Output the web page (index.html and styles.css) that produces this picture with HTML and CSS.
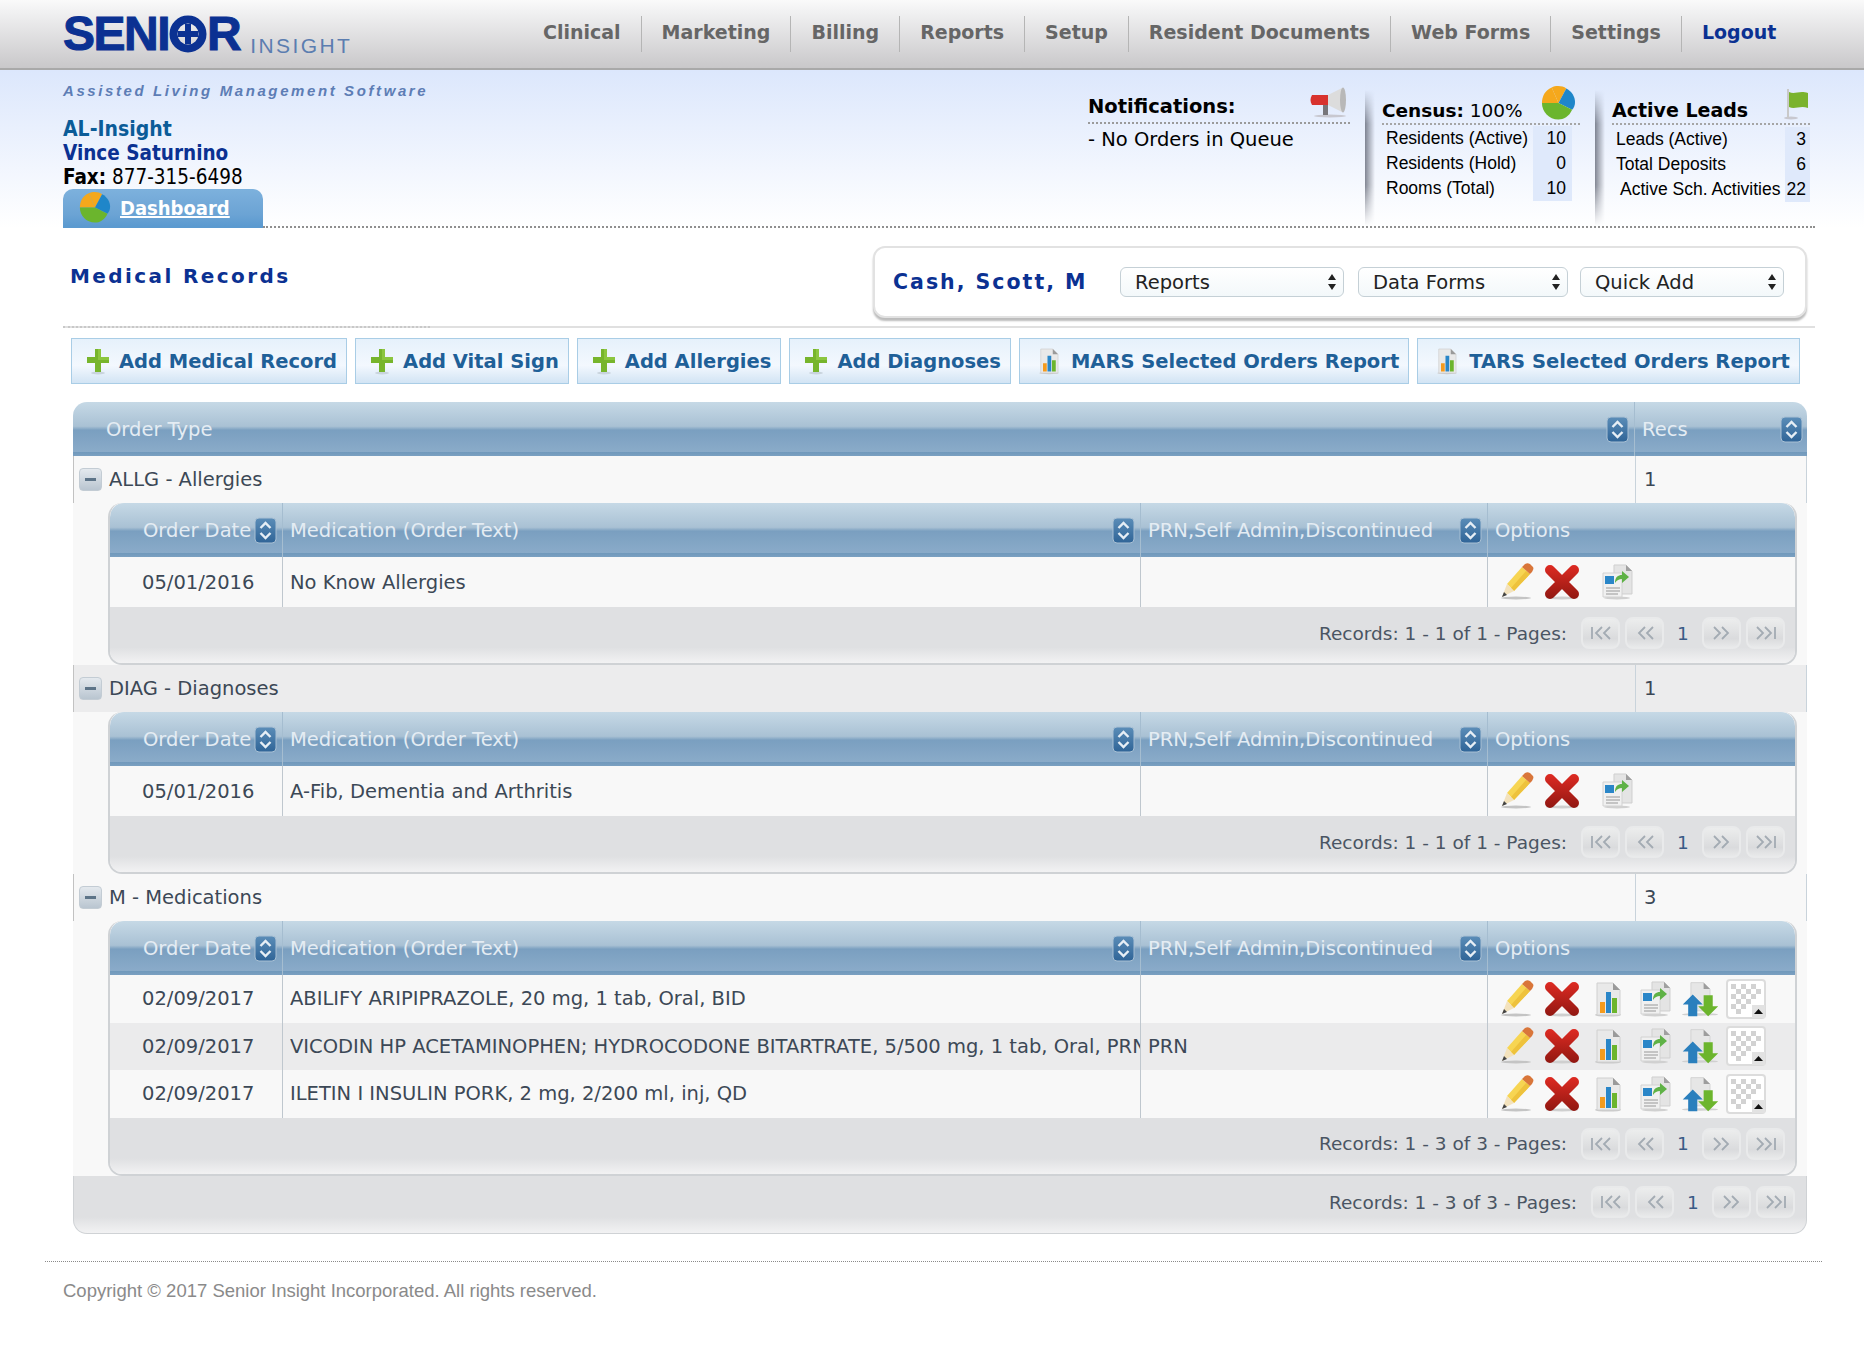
FILE: index.html
```html
<!DOCTYPE html>
<html lang="en">
<head>
  <meta charset="UTF-8" />
  <title>Senior Insight - Medical Records</title>
  <link rel="stylesheet" href="styles.css">
</head>
<body>
  <!-- icons, reused with <use> -->
  <svg class="sprite" aria-hidden="true">
    <defs>
      <linearGradient id="redfade" gradientUnits="userSpaceOnUse" x1="0" y1="4" x2="0" y2="36"><stop offset="0" stop-color="#dc2a22"/><stop offset="1" stop-color="#931812"/></linearGradient>
      <linearGradient id="sortfade" x1="0" y1="0" x2="0" y2="1"><stop offset="0" stop-color="#5b8db8"/><stop offset="1" stop-color="#2f6497"/></linearGradient>
    </defs>
    <symbol id="i-sort" viewBox="0 0 23 27">
      <rect x="1" y="1" width="21" height="25" rx="4" fill="url(#sortfade)" stroke="#a9c0d4"/>
      <path d="M6.5 11 11.5 6l5 5M6.5 16l5 5 5-5" fill="none" stroke="#e6eef5" stroke-width="2.4"/>
    </symbol>
    <symbol id="i-plus" viewBox="0 0 24 28">
      <ellipse cx="12" cy="26" rx="7" ry="1.5" fill="#c9d4dd"/>
      <path d="M9 2h6v8h8v6h-8v9H9v-9H1v-6h8z" fill="#77b52c"/>
      <path d="M9 2h6v8h8v3H12V2z" fill="#8cc63f"/>
    </symbol>
    <symbol id="i-pencil" viewBox="0 0 40 40">
      <ellipse cx="20" cy="36" rx="15" ry="1.4" fill="#c4c4c4"/>
      <path d="M11 22 26 5l8 7-16 17z" fill="#f7d552"/>
      <path d="M15 26 30 9l4 3-16 17z" fill="#eec23c"/>
      <path d="M26 5l3-3c2-1 3-1 5 0l3 3c1 2 0 3-1 5l-2 2z" fill="#d9763a"/>
      <path d="M11 22l7 7-12 6z" fill="#f3e2bd"/>
      <path d="M8 30l3 3-5 2z" fill="#444"/>
    </symbol>
    <symbol id="i-del" viewBox="0 0 40 40">
      <ellipse cx="20" cy="36" rx="16" ry="1.4" fill="#cfcfcf"/>
      <path d="M8 8l24 24M32 8 8 32" fill="none" stroke="url(#redfade)" stroke-width="10" stroke-linecap="round"/>
    </symbol>
    <symbol id="i-chart" viewBox="0 0 40 40">
      <ellipse cx="20" cy="36" rx="13" ry="1.6" fill="#c9c9c9"/>
      <path d="M9 4h16l7 7v25H9z" fill="#e9e9e9" stroke="#d0d0d0"/>
      <path d="M25 4l7 7h-7z" fill="#9a9a9a"/>
      <rect x="12" y="23" width="5" height="11" fill="#f59b1d"/>
      <rect x="18" y="13" width="5" height="21" fill="#2a86c8"/>
      <rect x="24" y="19" width="5" height="15" fill="#6cb52d"/>
    </symbol>
    <symbol id="i-copy" viewBox="0 0 40 40">
      <ellipse cx="21" cy="36" rx="13" ry="1.4" fill="#d0d0d0"/>
      <path d="M18 3h12l6 6v23H18z" fill="#e4e4e4" stroke="#cfcfcf"/>
      <path d="M30 3l6 6h-6z" fill="#a0a0a0"/>
      <path d="M7 11h19v24H7z" fill="#f0f0f0" stroke="#d2d2d2"/>
      <rect x="9" y="14" width="9" height="8" fill="#2a86c8"/>
      <path d="M10 26h14M10 29h14M10 32h12" stroke="#b5b5b5" stroke-width="1.3"/>
      <path d="M19 21c0-6 3-8 7-8V9l7 6-7 6v-4c-3 0-5 1-7 4z" fill="#5fb246"/>
    </symbol>
    <symbol id="i-updown" viewBox="0 0 44 40">
      <ellipse cx="22" cy="37" rx="20" ry="1.3" fill="#d0d0d0"/>
      <path d="M12 2h14l7 7v24H12z" fill="#e6e6e6" stroke="#d2d2d2"/>
      <path d="M26 2l7 7h-7z" fill="#9d9d9d"/>
      <path d="M14 15 25 26h-6v13H9V26H3z" fill="#2a7fbd"/>
      <path d="M26 16h10v12h6L31 39 20 28h6z" fill="#6cb52d"/>
    </symbol>
    <symbol id="i-check" viewBox="0 0 40 40">
      <rect x="1" y="1" width="38" height="38" rx="3" fill="#fff" stroke="#dcdcdc" stroke-width="2"/>
      <path d="M5 5h5v5H5zM15 5h5v5h-5zM25 5h5v5h-5zM10 10h5v5h-5zM20 10h5v5h-5zM30 10h5v5h-5zM5 15h5v5H5zM15 15h5v5h-5zM25 15h5v5h-5zM10 20h5v5h-5zM20 20h5v5h-5zM5 25h5v5H5zM15 25h5v5h-5zM10 30h5v5h-5z" fill="#d2d2d2"/>
      <rect x="26" y="26" width="13" height="13" fill="#e2e2e2"/>
      <path d="M28 35l4.500-5 4.500 5z" fill="#111"/>
    </symbol>
    <symbol id="i-pie" viewBox="0 0 36 36">
      <path d="M18 18 11 2c4-2 11-2 15 1z" fill="#f5a81c"/>
      <path d="M18 18 11 2C4 5 1 11 1 18z" fill="#f5a81c"/>
      <path d="M18 18 26 3c6 3 9 9 9 14 0 3-1 6-3 8z" fill="#1f86c9"/>
      <path d="M18 18 32 25c-3 7-9 10-14 10C8 35 1 27 1 18z" fill="#6bb52d"/>
    </symbol>
    <symbol id="i-first" viewBox="0 0 24 14"><path d="M3 1v12M13 1 7 7l6 6M21 1l-6 6 6 6" fill="none" stroke="#a3abb3" stroke-width="1.8"/></symbol>
    <symbol id="i-prev" viewBox="0 0 24 14"><path d="M12 1 6 7l6 6M20 1l-6 6 6 6" fill="none" stroke="#a3abb3" stroke-width="1.8"/></symbol>
    <symbol id="i-next" viewBox="0 0 24 14"><path d="M4 1l6 6-6 6M12 1l6 6-6 6" fill="none" stroke="#a3abb3" stroke-width="1.8"/></symbol>
    <symbol id="i-last" viewBox="0 0 24 14"><path d="M3 1l6 6-6 6M11 1l6 6-6 6M21 1v12" fill="none" stroke="#a3abb3" stroke-width="1.8"/></symbol>
  </svg>

  <header class="topbar">
    <div class="logo">
      <span class="logo-main">SENI<svg class="logo-o" viewBox="0 0 38 38"><circle cx="19" cy="19" r="14.500" fill="none" stroke="#0b3192" stroke-width="8"/><path d="M16 9h6v7h7v6h-7v7h-6v-7H9v-6h7z" fill="#0b3192"/></svg>R</span>
      <span class="logo-sub">INSIGHT</span>
    </div>
    <nav class="mainnav">
      <a href="#">Clinical</a>
      <a href="#">Marketing</a>
      <a href="#">Billing</a>
      <a href="#">Reports</a>
      <a href="#">Setup</a>
      <a href="#">Resident Documents</a>
      <a href="#">Web Forms</a>
      <a href="#">Settings</a>
      <a href="#" class="logout">Logout</a>
    </nav>
  </header>

  <section class="subhead">
    <div class="company">
      <div class="tagline">Assisted Living Management Software</div>
      <div class="co-name">AL-Insight</div>
      <div class="co-user">Vince Saturnino</div>
      <div class="co-fax"><b>Fax:</b> 877-315-6498</div>
      <div class="dash-tab">
        <svg class="dash-pie"><use href="#i-pie"/></svg>
        <a href="#">Dashboard</a>
      </div>
    </div>
    <div class="panels">
      <div class="panel-notify">
        <div class="notify-head">
          <b>Notifications:</b>
          <svg class="megaphone" viewBox="0 0 38 32">
            <ellipse cx="20" cy="30" rx="16" ry="1.500" fill="#c8c8d0"/>
            <rect x="13" y="18" width="5" height="11" fill="#77767a"/>
            <path d="M2 9h16v10H2c-2-3-2-7 0-10z" fill="#d8322e"/>
            <path d="M18 9 32 2v24L18 19z" fill="#dcdcdc"/>
            <ellipse cx="33" cy="14" rx="3" ry="12.500" fill="#b8b8b8"/>
          </svg>
        </div>
        <div class="notify-item">- No Orders in Queue</div>
      </div>
      <div class="panel-stat panel-census">
        <div class="stat-head"><span><b>Census:</b> 100%</span><svg class="stat-pie"><use href="#i-pie"/></svg></div>
        <table class="stat-table census-table">
          <tr><td>Residents (Active)</td><td class="num">10</td></tr>
          <tr><td>Residents (Hold)</td><td class="num">0</td></tr>
          <tr><td>Rooms (Total)</td><td class="num">10</td></tr>
        </table>
      </div>
      <div class="panel-stat panel-leads">
        <div class="stat-head"><b>Active Leads</b>
          <svg class="flag" viewBox="0 0 26 34">
            <ellipse cx="7" cy="31" rx="7" ry="1.500" fill="#c8c8d0"/>
            <rect x="3" y="2" width="2" height="29" fill="#c9c9c9"/>
            <path d="M5 5c6 3 10-2 19 1v15c-8-3-13 2-19-1z" fill="#7ab32e"/>
          </svg>
        </div>
        <table class="stat-table leads-table">
          <tr><td>Leads (Active)</td><td class="num">3</td></tr>
          <tr><td>Total Deposits</td><td class="num">6</td></tr>
          <tr><td class="indent">Active Sch. Activities</td><td class="num">22</td></tr>
        </table>
      </div>
    </div>
  </section>

  <main class="content">
    <div class="titlebar">
      <h2 class="page-title">Medical Records</h2>
      <div class="patient-box">
        <span class="patient-name">Cash, Scott, M</span>
        <div class="picker picker-reports"><select><option>Reports</option></select><svg class="picker-arrows" viewBox="0 0 10 18"><path d="M5 1l4 6H1zM5 17l4-6H1z"/></svg></div>
        <div class="picker picker-forms"><select><option>Data Forms</option></select><svg class="picker-arrows" viewBox="0 0 10 18"><path d="M5 1l4 6H1zM5 17l4-6H1z"/></svg></div>
        <div class="picker picker-add"><select><option>Quick Add</option></select><svg class="picker-arrows" viewBox="0 0 10 18"><path d="M5 1l4 6H1zM5 17l4-6H1z"/></svg></div>
      </div>
    </div>

    <div class="actions">
      <a href="#" class="action"><svg class="ic-plus"><use href="#i-plus"/></svg>Add Medical Record</a>
      <a href="#" class="action"><svg class="ic-plus"><use href="#i-plus"/></svg>Add Vital Sign</a>
      <a href="#" class="action"><svg class="ic-plus"><use href="#i-plus"/></svg>Add Allergies</a>
      <a href="#" class="action"><svg class="ic-plus"><use href="#i-plus"/></svg>Add Diagnoses</a>
      <a href="#" class="action"><svg class="ic-report"><use href="#i-chart"/></svg>MARS Selected Orders Report</a>
      <a href="#" class="action"><svg class="ic-report"><use href="#i-chart"/></svg>TARS Selected Orders Report</a>
    </div>

    <div class="grid">
      <table class="grid-table">
        <colgroup><col class="c-type"><col class="c-recs"></colgroup>
        <thead>
          <tr>
            <th class="th-type"><div class="th-in">Order Type<svg class="sort"><use href="#i-sort"/></svg></div></th>
            <th><div class="th-in">Recs<svg class="sort"><use href="#i-sort"/></svg></div></th>
          </tr>
        </thead>
        <tbody>
          <tr class="group">
            <td><div class="group-name"><span class="toggle"></span>ALLG - Allergies</div></td>
            <td class="group-count">1</td>
          </tr>
          <tr>
            <td colspan="2" class="detail">
              <div class="subgrid">
                <table class="sub-table">
                  <colgroup><col class="c-date"><col class="c-med"><col class="c-prn"><col></colgroup>
                  <thead>
                    <tr>
                      <th class="th-date"><div class="th-in">Order Date<svg class="sort"><use href="#i-sort"/></svg></div></th>
                      <th><div class="th-in">Medication (Order Text)<svg class="sort"><use href="#i-sort"/></svg></div></th>
                      <th><div class="th-in">PRN,Self Admin,Discontinued<svg class="sort"><use href="#i-sort"/></svg></div></th>
                      <th><div class="th-in">Options</div></th>
                    </tr>
                  </thead>
                  <tbody>
                    <tr class="row-single">
                      <td class="td-date">05/01/2016</td>
                      <td><div class="clip">No Know Allergies</div></td>
                      <td></td>
                      <td><div class="opts"><svg class="opt"><use href="#i-pencil"/></svg><svg class="opt"><use href="#i-del"/></svg><svg class="opt opt-copy"><use href="#i-copy"/></svg></div></td>
                    </tr>
                  </tbody>
                </table>
                <div class="pagerbar">
                  <span class="rec-text">Records: 1 - 1 of 1 - Pages:</span>
                  <span class="pg"><svg><use href="#i-first"/></svg></span><span class="pg"><svg><use href="#i-prev"/></svg></span><span class="pg-num">1</span><span class="pg"><svg><use href="#i-next"/></svg></span><span class="pg"><svg><use href="#i-last"/></svg></span>
                </div>
              </div>
            </td>
          </tr>

          <tr class="group group-alt">
            <td><div class="group-name"><span class="toggle"></span>DIAG - Diagnoses</div></td>
            <td class="group-count">1</td>
          </tr>
          <tr>
            <td colspan="2" class="detail">
              <div class="subgrid">
                <table class="sub-table">
                  <colgroup><col class="c-date"><col class="c-med"><col class="c-prn"><col></colgroup>
                  <thead>
                    <tr>
                      <th class="th-date"><div class="th-in">Order Date<svg class="sort"><use href="#i-sort"/></svg></div></th>
                      <th><div class="th-in">Medication (Order Text)<svg class="sort"><use href="#i-sort"/></svg></div></th>
                      <th><div class="th-in">PRN,Self Admin,Discontinued<svg class="sort"><use href="#i-sort"/></svg></div></th>
                      <th><div class="th-in">Options</div></th>
                    </tr>
                  </thead>
                  <tbody>
                    <tr class="row-single">
                      <td class="td-date">05/01/2016</td>
                      <td><div class="clip">A-Fib, Dementia and Arthritis</div></td>
                      <td></td>
                      <td><div class="opts"><svg class="opt"><use href="#i-pencil"/></svg><svg class="opt"><use href="#i-del"/></svg><svg class="opt opt-copy"><use href="#i-copy"/></svg></div></td>
                    </tr>
                  </tbody>
                </table>
                <div class="pagerbar">
                  <span class="rec-text">Records: 1 - 1 of 1 - Pages:</span>
                  <span class="pg"><svg><use href="#i-first"/></svg></span><span class="pg"><svg><use href="#i-prev"/></svg></span><span class="pg-num">1</span><span class="pg"><svg><use href="#i-next"/></svg></span><span class="pg"><svg><use href="#i-last"/></svg></span>
                </div>
              </div>
            </td>
          </tr>

          <tr class="group">
            <td><div class="group-name"><span class="toggle"></span>M - Medications</div></td>
            <td class="group-count">3</td>
          </tr>
          <tr>
            <td colspan="2" class="detail">
              <div class="subgrid">
                <table class="sub-table">
                  <colgroup><col class="c-date"><col class="c-med"><col class="c-prn"><col></colgroup>
                  <thead>
                    <tr>
                      <th class="th-date"><div class="th-in">Order Date<svg class="sort"><use href="#i-sort"/></svg></div></th>
                      <th><div class="th-in">Medication (Order Text)<svg class="sort"><use href="#i-sort"/></svg></div></th>
                      <th><div class="th-in">PRN,Self Admin,Discontinued<svg class="sort"><use href="#i-sort"/></svg></div></th>
                      <th><div class="th-in">Options</div></th>
                    </tr>
                  </thead>
                  <tbody>
                    <tr>
                      <td class="td-date">02/09/2017</td>
                      <td><div class="clip">ABILIFY ARIPIPRAZOLE, 20 mg, 1 tab, Oral, BID</div></td>
                      <td></td>
                      <td><div class="opts"><svg class="opt"><use href="#i-pencil"/></svg><svg class="opt"><use href="#i-del"/></svg><svg class="opt"><use href="#i-chart"/></svg><svg class="opt"><use href="#i-copy"/></svg><svg class="opt"><use href="#i-updown"/></svg><svg class="opt"><use href="#i-check"/></svg></div></td>
                    </tr>
                    <tr class="row-alt">
                      <td class="td-date">02/09/2017</td>
                      <td><div class="clip">VICODIN HP ACETAMINOPHEN; HYDROCODONE BITARTRATE, 5/500 mg, 1 tab, Oral, PRN</div></td>
                      <td>PRN</td>
                      <td><div class="opts"><svg class="opt"><use href="#i-pencil"/></svg><svg class="opt"><use href="#i-del"/></svg><svg class="opt"><use href="#i-chart"/></svg><svg class="opt"><use href="#i-copy"/></svg><svg class="opt"><use href="#i-updown"/></svg><svg class="opt"><use href="#i-check"/></svg></div></td>
                    </tr>
                    <tr>
                      <td class="td-date">02/09/2017</td>
                      <td><div class="clip">ILETIN I INSULIN PORK, 2 mg, 2/200 ml, inj, QD</div></td>
                      <td></td>
                      <td><div class="opts"><svg class="opt"><use href="#i-pencil"/></svg><svg class="opt"><use href="#i-del"/></svg><svg class="opt"><use href="#i-chart"/></svg><svg class="opt"><use href="#i-copy"/></svg><svg class="opt"><use href="#i-updown"/></svg><svg class="opt"><use href="#i-check"/></svg></div></td>
                    </tr>
                  </tbody>
                </table>
                <div class="pagerbar">
                  <span class="rec-text">Records: 1 - 3 of 3 - Pages:</span>
                  <span class="pg"><svg><use href="#i-first"/></svg></span><span class="pg"><svg><use href="#i-prev"/></svg></span><span class="pg-num">1</span><span class="pg"><svg><use href="#i-next"/></svg></span><span class="pg"><svg><use href="#i-last"/></svg></span>
                </div>
              </div>
            </td>
          </tr>
        </tbody>
      </table>
      <div class="pagerbar pagerbar-outer">
        <span class="rec-text">Records: 1 - 3 of 3 - Pages:</span>
        <span class="pg"><svg><use href="#i-first"/></svg></span><span class="pg"><svg><use href="#i-prev"/></svg></span><span class="pg-num">1</span><span class="pg"><svg><use href="#i-next"/></svg></span><span class="pg"><svg><use href="#i-last"/></svg></span>
      </div>
    </div>
  </main>

  <footer class="pagefoot">
    <p>Copyright &copy; 2017 Senior Insight Incorporated. All rights reserved.</p>
  </footer>
</body>
</html>
```

FILE: styles.css
```css
* { box-sizing: border-box; }

body {
  margin: 0;
  font-family: "DejaVu Sans", sans-serif;
  font-size: 19.5px;
  color: #3c4856;
  background: #fff;
}

.sprite { position: absolute; width: 0; height: 0; }

a { text-decoration: none; }

/* top bar */
.topbar {
  height: 70px;
  display: flex;
  align-items: center;
  padding-left: 63px;
  background: linear-gradient(#fafafa, #f2f2f3 15%, #c9c8ca);
  border-bottom: 2px solid #a9a9a9;
}

.logo { width: 460px; display: flex; align-items: flex-end; height: 40px; }

.logo-main {
  font-family: "Liberation Sans", sans-serif;
  font-weight: bold;
  font-size: 48px;
  line-height: 40px;
  letter-spacing: -1.5px;
  color: #0b3192;
  -webkit-text-stroke: 1px #0b3192;
  display: flex;
  align-items: center;
}

.logo-o { width: 38px; height: 38px; }

.logo-sub {
  font-family: "Liberation Sans", sans-serif;
  font-size: 21px;
  line-height: 21px;
  letter-spacing: 2.400px;
  color: #5b7db0;
  margin-left: 10px;
  margin-bottom: -2px;
}

.mainnav { display: flex; align-items: center; }

.mainnav a {
  font-size: 19px;
  font-weight: bold;
  color: #666;
  padding: 0 20px;
  height: 36px;
  line-height: 32px;
  border-right: 1px solid #b5b5b5;
  white-space: nowrap;
}

.mainnav a.logout { color: #0b3192; border-right: none; }

/* blue strip */
.subhead {
  height: 158px;
  display: flex;
  padding: 0 49px 0 63px;
  background: linear-gradient(#dce7fc, #fff);
  color: #000;
}

.company { width: 200px; flex: none; font-family: "DejaVu Sans Condensed", "DejaVu Sans", sans-serif; display: flex; flex-direction: column; }

.tagline {
  font-family: "Liberation Sans", sans-serif;
  font-style: italic;
  font-weight: bold;
  font-size: 15px;
  letter-spacing: 2.600px;
  color: #5d7db5;
  white-space: nowrap;
  padding-top: 12px;
  height: 47px;
}

.co-name { font-weight: bold; font-size: 21px; line-height: 24px; color: #0b5c98; }
.co-user { font-weight: bold; font-size: 20.500px; line-height: 24px; color: #0b3192; }
.co-fax { font-size: 20.500px; line-height: 24px; white-space: nowrap; }

.dash-tab {
  margin-top: auto;
  height: 39px;
  display: flex;
  align-items: center;
  padding-left: 16px;
  gap: 9px;
  border-radius: 10px 10px 0 0;
  background: linear-gradient(#7db1dd, #6ba3d4 70%, #5b9ad0);
  border-bottom: 2px solid #5b9ad0;
}

.dash-tab a { color: #fff; font-weight: bold; font-size: 20px; text-decoration: underline; }
.dash-pie { width: 32px; height: 35px; }

.panels {
  flex: 1;
  display: flex;
  justify-content: flex-end;
  border-bottom: 2px dotted #8f8f8f;
}

.panel-notify { width: 262px; margin-right: 32px; padding-top: 20px; font-size: 19.500px; }

.notify-head {
  display: flex;
  justify-content: space-between;
  align-items: flex-end;
  height: 34px;
  padding-bottom: 4px;
  border-bottom: 2px dotted #9a9a9a;
  font-size: 19.500px;
}

.megaphone { width: 38px; height: 32px; margin-right: 2px; }
.notify-item { margin-top: 3px; line-height: 26px; }

.panel-stat { position: relative; padding-top: 18px; font-family: "Liberation Sans", sans-serif; font-size: 17.500px; }

/* soft vertical shadow left of each stat panel */
.panel-stat::before {
  content: "";
  position: absolute;
  left: -17px;
  top: 20px;
  bottom: 0;
  width: 10px;
  background: linear-gradient(to right, rgba(80, 85, 100, 0.7), rgba(80, 85, 100, 0));
  -webkit-mask-image: linear-gradient(transparent, #000 25%, #000 70%, transparent);
}

.panel-census { width: 198px; margin-right: 32px; }
.panel-leads { width: 203px; padding-right: 5px; }

.stat-head {
  display: flex;
  justify-content: space-between;
  align-items: flex-end;
  height: 37px;
  padding-bottom: 2px;
  border-bottom: 2px dotted #a5a5a5;
  font-family: "DejaVu Sans", sans-serif;
  font-size: 19px;
  white-space: nowrap;
}

.stat-pie { width: 35px; height: 36px; margin-right: 4px; }
.flag { width: 26px; height: 34px; }

.panel-census .stat-head { font-size: 18.500px; }
.panel-census .stat-head b { font-weight: bold; }

.stat-table { border-collapse: collapse; width: 100%; margin-top: 1px; }
.stat-table td { height: 25px; padding: 0 0 0 4px; white-space: nowrap; }
.stat-table .num { background: #dfe9fb; text-align: right; padding: 0 6px 0 0; }
.census-table { width: 190px; }
.census-table .num { width: 39px; }
.leads-table .num { width: 25px; padding-right: 4px; }
.leads-table { margin-top: 2px; }
.stat-table .indent { padding-left: 8px; }

/* title row */
.content { padding: 0 49px 0 63px; }

.titlebar {
  height: 100px;
  display: flex;
  justify-content: space-between;
  align-items: flex-start;
  padding-right: 8px;
  border-bottom: 2px solid #e0e0e0;
}

.page-title {
  width: 367px;
  height: 100px;
  margin: 0;
  padding: 36px 0 0 7px;
  font-size: 20px;
  font-weight: bold;
  letter-spacing: 2.400px;
  color: #0b3192;
  border-bottom: 2px dotted #c8c8c8;
}

.patient-box {
  width: 934px;
  height: 72px;
  margin-top: 18px;
  display: flex;
  align-items: center;
  padding-left: 18px;
  background: #fff;
  border: 2px solid #e2e2e2;
  border-radius: 12px;
  box-shadow: 0 3px 2px #bcbcbc;
}

.patient-name {
  width: 227px;
  font-size: 20.500px;
  font-weight: bold;
  letter-spacing: 2px;
  color: #0b3192;
  white-space: nowrap;
}

.picker { position: relative; height: 30px; margin-right: 12px; }
.picker-reports { width: 224px; margin-right: 14px; }
.picker-forms { width: 210px; }
.picker-add { width: 204px; margin-right: 0; }

.picker select {
  appearance: none;
  -webkit-appearance: none;
  width: 100%;
  height: 100%;
  padding: 0 0 0 14px;
  border: 1px solid #c5d0d6;
  border-radius: 6px;
  background: linear-gradient(#fff, #f3f8fa);
  font-family: "DejaVu Sans", sans-serif;
  font-size: 19.500px;
  color: #222;
}

.picker-arrows { position: absolute; right: 7px; top: 6px; width: 10px; height: 18px; fill: #222; }

/* action buttons */
.actions { display: flex; gap: 8px; margin: 10px 0 0 8px; }

.action {
  height: 46px;
  display: flex;
  align-items: center;
  gap: 9px;
  padding: 0 9px 0 14px;
  border: 1px solid #a9cde6;
  background: linear-gradient(#e6f1fb, #f3f8fe 60%, #d2e4f4);
  color: #1f6098;
  font-weight: bold;
  white-space: nowrap;
}

.ic-plus { width: 24px; height: 28px; flex: none; }
.ic-report { width: 30px; height: 34px; flex: none; margin-right: -2px; }

/* grids */
.grid { margin: 18px 0 0 10px; width: 1734px; }

.grid-table, .sub-table { width: 100%; table-layout: fixed; border-collapse: separate; border-spacing: 0; }

.c-recs { width: 172px; }
.c-date { width: 173px; }
.c-med { width: 858px; }
.c-prn { width: 347px; }

th {
  height: 54px;
  padding: 0 5px 0 7px;
  text-align: left;
  font-weight: normal;
  color: #e4ecf3;
  background: linear-gradient(#c6d9e6, #a9c1d4 45%, #7a9fc0 52%, #8aabc9 92%, #6f98bb 92%, #7ba0c1);
  border-right: 1px solid #a5bdd0;
}

th:last-child { border-right: none; }
.grid-table > thead th:first-child { border-top-left-radius: 14px; }
.grid-table > thead th:last-child { border-top-right-radius: 14px; padding-right: 4px; }
.sub-table th:first-child { border-top-left-radius: 14px; }
.sub-table th:last-child { border-top-right-radius: 14px; }

.th-type { padding-left: 33px; }
.th-date { padding-left: 33px; }

.th-in { display: flex; justify-content: space-between; align-items: center; white-space: nowrap; }
.sort { width: 23px; height: 27px; flex: none; }

.group td { height: 47px; background: #f8f8f8; padding: 0; }
.group-alt td { background: #ececed; }

.group-name { display: flex; align-items: center; gap: 7px; padding-left: 5px; border-left: 1px solid #c2c2c2; height: 47px; }

.toggle {
  width: 23px;
  height: 23px;
  flex: none;
  position: relative;
  border: 1px solid #c3ccd4;
  border-radius: 4px;
  background: linear-gradient(#e4e9ee, #b9c5d0);
}

.toggle::after {
  content: "";
  position: absolute;
  left: 5px;
  right: 5px;
  top: 9px;
  height: 3px;
  background: #5d7488;
}

.group-count { padding-left: 8px !important; border-left: 1px solid #c9d3db; border-right: 1px solid #c9d3db; }

.detail { padding: 0 10px 0 35px; background: #f8f8f8; }

.subgrid {
  border: 2px solid #cfd2d5;
  border-top: none;
  border-radius: 14px;
  overflow: hidden;
  background: #f8f8f8;
}

.sub-table td {
  height: 47.500px;
  padding: 0 0 0 7px;
  background: #f8f8f8;
  border-right: 1px solid #bfc7ce;
}

.sub-table td:last-child { border-right: none; }
.sub-table .row-single td { height: 50px; }
.sub-table .row-alt td { background: #ebebec; }
.sub-table .td-date { padding-left: 32px; }

.clip { overflow: hidden; white-space: nowrap; }

.opts { display: flex; gap: 6px; padding-left: 1px; align-items: center; }
.opt { width: 40px; height: 40px; flex: none; }
.opt-copy { margin-left: 8px; }

.pagerbar {
  height: 56px;
  display: flex;
  justify-content: flex-end;
  align-items: center;
  padding: 0 10px 4px 0;
  background: linear-gradient(#dfe0e2, #dfe0e2 72%, #f2f2f3);
  font-size: 18.500px;
  color: #4a5563;
}

.pagerbar-outer {
  height: 58px;
  padding-right: 11px;
  border: 1px solid #cfd2d5;
  border-top: none;
  border-radius: 0 0 14px 14px;
}

.rec-text { margin-right: 9px; white-space: nowrap; }

.pg {
  width: 39px;
  height: 32px;
  margin-left: 5px;
  display: flex;
  align-items: center;
  justify-content: center;
  border: 2px solid #e9eaeb;
  border-radius: 8px;
  background: linear-gradient(#eceded, #dadbdd 70%, #e8e9ea);
}

.pg:first-of-type { margin-left: 0; }
.pg svg { width: 24px; height: 14px; }
.pg-num { width: 28px; margin-left: 5px; text-align: center; color: #3a5a86; }

/* copyright */
.pagefoot { margin: 27px 42px 0 45px; border-top: 1px dotted #8a8a8a; padding: 18px 0 60px 18px; }
.pagefoot p { margin: 0; font-family: "Liberation Sans", sans-serif; font-size: 18.500px; color: #8a8a8a; }
```
